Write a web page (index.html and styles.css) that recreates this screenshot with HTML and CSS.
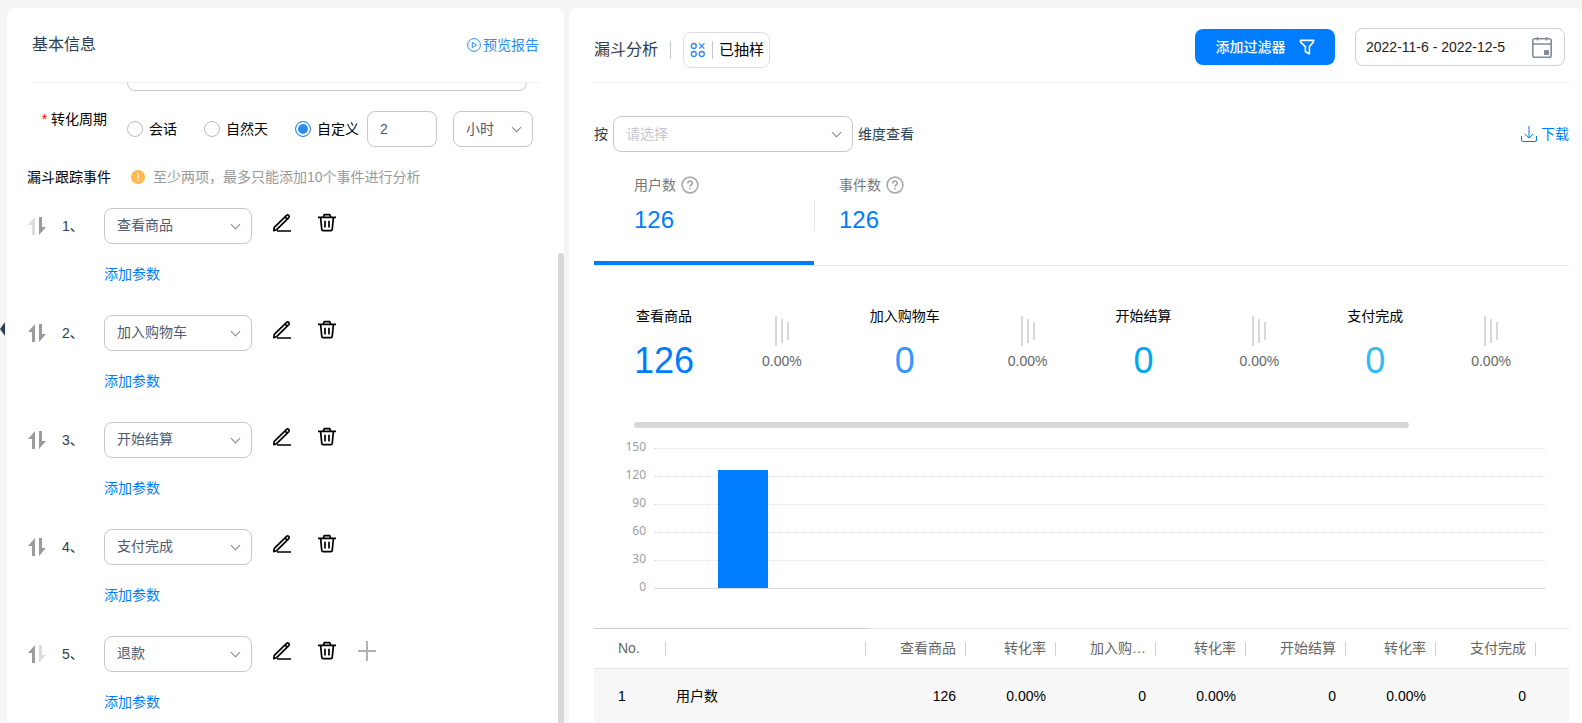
FILE: index.html
```html
<!DOCTYPE html>
<html lang="zh-CN">
<head>
  <meta charset="UTF-8">
  <meta name="viewport" content="width=device-width, initial-scale=1.0">
  <title>漏斗分析</title>
  <link rel="stylesheet" href="styles.css">
</head>
<body>
  <svg class="sprite" aria-hidden="true">
    <symbol id="icon-edit" viewBox="0 0 20 20">
      <path d="M1.8 17.6 L2.3 14.4 L14.6 2.3 C16 1.1 18 3.1 16.8 4.6 L4.6 16.7 Z M13 3.9 L15.2 6.1 M5 18 H19" fill="none" stroke="currentColor" stroke-width="1.7" stroke-linejoin="round"/>
    </symbol>
    <symbol id="icon-delete" viewBox="0 0 20 20">
      <path d="M1 4.4 H19 M6.2 4.2 L7.2 1.7 H12.8 L13.8 4.2 M3.6 4.6 L4.8 16.6 Q5 17.6 6 17.6 H14 Q15 17.6 15.2 16.6 L16.4 4.6 M8 7.8 V14.6 M12 7.8 V14.6" fill="none" stroke="currentColor" stroke-width="1.7" stroke-linejoin="round"/>
    </symbol>
    <symbol id="icon-help" viewBox="0 0 18 18">
      <circle cx="9" cy="9" r="7.9" fill="none" stroke="currentColor" stroke-width="1.6"/>
      <path d="M6.8 7.4 C6.8 4.4 11.3 4.4 11.3 7.2 C11.3 8.7 9 8.8 9 10.8 M9 12 V13.5" fill="none" stroke="currentColor" stroke-width="1.7"/>
    </symbol>
  </svg>

  <div class="page">
    <button class="collapse" aria-label="收起"></button>

    <aside class="panel side">
      <header class="side-header">
        <h2>基本信息</h2>
        <a href="#" class="preview">
          <svg width="14" height="14" viewBox="0 0 14 14" fill="none" stroke="currentColor"><circle cx="7" cy="7" r="6.4"/><path d="M5.3 4.4 L9.6 7 L5.3 9.6 Z" stroke-linejoin="round"/></svg>
          预览报告
        </a>
      </header>

      <div class="side-body">
        <form class="form">
          <input type="text" class="control name-input" aria-label="名称">

          <div class="period">
            <span class="form-label"><i>*</i> 转化周期</span>
            <label class="radio"><input type="radio" name="period">会话</label>
            <label class="radio"><input type="radio" name="period">自然天</label>
            <label class="radio radio-last"><input type="radio" name="period" checked>自定义</label>
            <input type="text" class="control period-value" value="2" aria-label="时长">
            <span class="select period-unit">
              <select class="control" aria-label="单位"><option>小时</option><option>天</option></select>
            </span>
          </div>

          <div class="tip">
            <span class="tip-title">漏斗跟踪事件</span>
            <svg width="14" height="14" viewBox="0 0 14 14"><circle cx="7" cy="7" r="7" fill="#ffb84f"/><path d="M7 3 V8.4 M7 9.8 V11.2" stroke="#fff" stroke-width="1.3"/></svg>
            <span class="tip-text">至少两项，最多只能添加10个事件进行分析</span>
          </div>

          <div class="event">
            <div class="event-row">
              <svg class="sort" viewBox="0 0 18 18"><path class="off" d="M7 0 L0 8 H4 V18 H7 Z"/><path d="M11 0 H14 V10 H18 L11 18 Z"/></svg>
              <span class="event-no">1、</span>
              <span class="select event-select"><select class="control" aria-label="事件1"><option>查看商品</option></select></span>
              <div class="actions">
                <button type="button" class="icon-btn" aria-label="编辑"><svg><use href="#icon-edit"/></svg></button>
                <button type="button" class="icon-btn" aria-label="删除"><svg><use href="#icon-delete"/></svg></button>
              </div>
            </div>
            <a href="#" class="add-param">添加参数</a>
          </div>

          <div class="event">
            <div class="event-row">
              <svg class="sort" viewBox="0 0 18 18"><path d="M7 0 L0 8 H4 V18 H7 Z"/><path d="M11 0 H14 V10 H18 L11 18 Z"/></svg>
              <span class="event-no">2、</span>
              <span class="select event-select"><select class="control" aria-label="事件2"><option>加入购物车</option></select></span>
              <div class="actions">
                <button type="button" class="icon-btn" aria-label="编辑"><svg><use href="#icon-edit"/></svg></button>
                <button type="button" class="icon-btn" aria-label="删除"><svg><use href="#icon-delete"/></svg></button>
              </div>
            </div>
            <a href="#" class="add-param">添加参数</a>
          </div>

          <div class="event">
            <div class="event-row">
              <svg class="sort" viewBox="0 0 18 18"><path d="M7 0 L0 8 H4 V18 H7 Z"/><path d="M11 0 H14 V10 H18 L11 18 Z"/></svg>
              <span class="event-no">3、</span>
              <span class="select event-select"><select class="control" aria-label="事件3"><option>开始结算</option></select></span>
              <div class="actions">
                <button type="button" class="icon-btn" aria-label="编辑"><svg><use href="#icon-edit"/></svg></button>
                <button type="button" class="icon-btn" aria-label="删除"><svg><use href="#icon-delete"/></svg></button>
              </div>
            </div>
            <a href="#" class="add-param">添加参数</a>
          </div>

          <div class="event">
            <div class="event-row">
              <svg class="sort" viewBox="0 0 18 18"><path d="M7 0 L0 8 H4 V18 H7 Z"/><path d="M11 0 H14 V10 H18 L11 18 Z"/></svg>
              <span class="event-no">4、</span>
              <span class="select event-select"><select class="control" aria-label="事件4"><option>支付完成</option></select></span>
              <div class="actions">
                <button type="button" class="icon-btn" aria-label="编辑"><svg><use href="#icon-edit"/></svg></button>
                <button type="button" class="icon-btn" aria-label="删除"><svg><use href="#icon-delete"/></svg></button>
              </div>
            </div>
            <a href="#" class="add-param">添加参数</a>
          </div>

          <div class="event">
            <div class="event-row">
              <svg class="sort" viewBox="0 0 18 18"><path d="M7 0 L0 8 H4 V18 H7 Z"/><path class="off" d="M11 0 H14 V10 H18 L11 18 Z"/></svg>
              <span class="event-no">5、</span>
              <span class="select event-select"><select class="control" aria-label="事件5"><option>退款</option></select></span>
              <div class="actions">
                <button type="button" class="icon-btn" aria-label="编辑"><svg><use href="#icon-edit"/></svg></button>
                <button type="button" class="icon-btn" aria-label="删除"><svg><use href="#icon-delete"/></svg></button>
                <button type="button" class="icon-btn add" aria-label="添加"><svg viewBox="0 0 20 20"><path d="M1 10 H19 M10 0 V20" stroke="#b0b0b0" stroke-width="2"/></svg></button>
              </div>
            </div>
            <a href="#" class="add-param">添加参数</a>
          </div>
        </form>
      </div>
      <div class="side-scroll"></div>
    </aside>

    <main class="panel main">
      <header class="main-header">
        <div class="main-title">
          <h2>漏斗分析</h2>
          <span class="divider"></span>
          <button class="sample">
            <svg width="16" height="16" viewBox="0 0 16 16" fill="none" stroke="#2b85ff" stroke-width="1.3"><circle cx="3.8" cy="4" r="2.5"/><circle cx="3.8" cy="12" r="2.5"/><circle cx="11.8" cy="12" r="2.5"/><path d="M9.2 1.4 L14.4 6.6 M14.4 1.4 L9.2 6.6"/></svg>
            <span class="divider"></span>
            已抽样
          </button>
        </div>
        <div class="main-tools">
          <button class="filter-btn">
            添加过滤器
            <svg width="16" height="16" viewBox="0 0 16 16" fill="none" stroke="#fff" stroke-width="1.6" stroke-linejoin="round"><path d="M1.4 1.4 H14.6 V2.8 L10.4 7.6 V15 L6.4 12.8 V7.6 L1.4 2.8 Z"/></svg>
          </button>
          <div class="date">
            <input type="text" value="2022-11-6 - 2022-12-5" aria-label="日期范围">
            <svg width="20" height="21" viewBox="0 0 20 21" fill="none" stroke="#808b99" stroke-width="1.6"><rect x=".8" y="1.8" width="18.4" height="18.4" rx="2"/><path d="M.8 7 H19.2 M5.5 0 V3.4 M14.5 0 V3.4"/><rect x="12" y="13" width="5" height="5" rx="1" fill="#808b99" stroke="none"/></svg>
          </div>
        </div>
      </header>

      <div class="dimension">
        <label for="dimension">按</label>
        <span class="select dimension-select">
          <select class="control placeholder" id="dimension"><option>请选择</option></select>
        </span>
        <span>维度查看</span>
        <a href="#" class="download">
          <svg width="16" height="16" viewBox="0 0 16 16" fill="none" stroke="currentColor"><path d="M8 0 V12 M4 8 L8 12 L12 8 M.5 10 V14 Q.5 15.5 2 15.5 H14 Q15.5 15.5 15.5 14 V10"/></svg>
          下载
        </a>
      </div>

      <div class="tabs">
        <div class="tab active">
          <div class="tab-name">用户数 <svg width="18" height="18"><use href="#icon-help"/></svg></div>
          <div class="tab-value">126</div>
        </div>
        <div class="tab">
          <div class="tab-name">事件数 <svg width="18" height="18"><use href="#icon-help"/></svg></div>
          <div class="tab-value">126</div>
        </div>
      </div>

      <div class="funnel">
        <div class="step step-1"><div class="step-name">查看商品</div><div class="step-value">126</div></div>
        <div class="rate"><div class="rate-bars"><i></i><i></i><i></i></div>0.00%</div>
        <div class="step step-2"><div class="step-name">加入购物车</div><div class="step-value">0</div></div>
        <div class="rate"><div class="rate-bars"><i></i><i></i><i></i></div>0.00%</div>
        <div class="step step-3"><div class="step-name">开始结算</div><div class="step-value">0</div></div>
        <div class="rate"><div class="rate-bars"><i></i><i></i><i></i></div>0.00%</div>
        <div class="step step-4"><div class="step-name">支付完成</div><div class="step-value">0</div></div>
        <div class="rate"><div class="rate-bars"><i></i><i></i><i></i></div>0.00%</div>
      </div>
      <div class="funnel-scroll"><div class="funnel-thumb"></div></div>

      <div class="chart">
        <div class="axis">
          <span>150</span><span>120</span><span>90</span><span>60</span><span>30</span><span>0</span>
        </div>
        <div class="plot">
          <div class="line"></div>
          <div class="line"></div>
          <div class="line"></div>
          <div class="line"></div>
          <div class="line"></div>
          <div class="bars">
            <div class="slot"><div class="bar" style="height: 84%"></div></div>
            <div class="slot"></div>
            <div class="slot"></div>
            <div class="slot"></div>
            <div class="slot"></div>
          </div>
        </div>
      </div>

      <div class="table-wrap">
        <table class="table">
          <colgroup>
            <col class="col-no"><col class="col-name">
            <col class="col-count"><col class="col-rate">
            <col class="col-count"><col class="col-rate">
            <col class="col-count"><col class="col-rate">
            <col class="col-count"><col class="col-rate">
          </colgroup>
          <thead>
            <tr>
              <th class="no">No.</th>
              <th></th>
              <th>查看商品</th>
              <th>转化率</th>
              <th>加入购…</th>
              <th>转化率</th>
              <th>开始结算</th>
              <th>转化率</th>
              <th>支付完成</th>
              <th></th>
            </tr>
          </thead>
          <tbody>
            <tr>
              <td class="no">1</td>
              <td class="name">用户数</td>
              <td>126</td>
              <td>0.00%</td>
              <td>0</td>
              <td>0.00%</td>
              <td>0</td>
              <td>0.00%</td>
              <td>0</td>
              <td></td>
            </tr>
          </tbody>
        </table>
      </div>
    </main>
  </div>
</body>
</html>
```

FILE: styles.css
```css
:root {
  --blue: #007dff;
  --text: #2c3e50;
  --border: #c8c8c8;
  --line: #efefef;
}

* {
  box-sizing: border-box;
}

body {
  margin: 0;
  background-color: #f5f5f5;
  color: var(--text);
  font-family: "Liberation Sans", "Noto Sans CJK SC", sans-serif;
  font-size: 14px;
  line-height: 20px;
}

button,
input,
select {
  font: inherit;
  color: inherit;
}

button {
  border: none;
  background: none;
  padding: 0;
  cursor: pointer;
}

a {
  color: var(--blue);
  text-decoration: none;
}

h2 {
  margin: 0;
  font-size: 16px;
  font-weight: 400;
}

.sprite {
  display: none;
}

.page {
  position: relative;
  display: flex;
  gap: 5px;
  height: 100vh;
  padding: 8px 0 0 7px;
  overflow: hidden;
}

.collapse {
  position: absolute;
  left: 0;
  top: 322px;
  border: solid transparent;
  border-width: 7px 5px 7px 0;
  border-right-color: var(--text);
}

.panel {
  background-color: #fff;
  border-radius: 8px 8px 0 0;
}

/* left side */
.side {
  position: relative;
  flex: 0 0 557px;
  display: flex;
  flex-direction: column;
}

.side-header {
  display: flex;
  justify-content: space-between;
  align-items: center;
  flex: 0 0 75px;
  margin: 0 25px;
  border-bottom: 1px solid var(--line);
}

.preview {
  display: flex;
  align-items: center;
  gap: 2px;
  color: #2d8cf0;
}

.side-body {
  flex: 1;
  min-height: 0;
  padding-left: 20px;
  overflow: hidden;
}

.side-scroll {
  position: absolute;
  right: 0;
  top: 245px;
  bottom: 0;
  width: 6px;
  border-radius: 3px 3px 0 0;
  background-color: #d8d8d8;
}

/* the list is scrolled, only the bottom of the first field is in view */
.form {
  margin-top: -28px;
}

.control {
  width: 100%;
  height: 36px;
  padding: 0 12px;
  border: 1px solid var(--border);
  border-radius: 8px;
  background-color: #fff;
  color: #515a6e;
  outline: none;
  appearance: none;
}

.select {
  position: relative;
  display: block;
}

.select::after {
  content: "";
  position: absolute;
  right: 13px;
  top: 13px;
  width: 6px;
  height: 6px;
  border: solid #808695;
  border-width: 0 1px 1px 0;
  transform: rotate(45deg);
  pointer-events: none;
}

.name-input {
  display: block;
  width: 400px;
  margin-left: 100px;
}

.period {
  display: flex;
  align-items: center;
  margin-top: 20px;
  color: #000;
}

.form-label {
  align-self: flex-start;
  width: 80px;
  margin-right: 20px;
  line-height: 16px;
  text-align: right;
}

.form-label i {
  color: #f00;
  font-style: normal;
}

.radio {
  display: flex;
  align-items: center;
  gap: 6px;
  margin-right: 27px;
}

.radio-last {
  margin-right: 8px;
}

.radio input {
  width: 16px;
  height: 16px;
  margin: 0;
  border: 1px solid #b8bbc0;
  border-radius: 50%;
  appearance: none;
}

.radio input:checked {
  border-color: #2d8cf0;
  background-color: #2d8cf0;
  box-shadow: inset 0 0 0 2px #fff;
}

.period-value {
  width: 70px;
  margin-right: 16px;
}

.period-unit {
  width: 80px;
}

.tip {
  display: flex;
  align-items: center;
  margin: 20px 0 21px;
  color: #000;
}

.tip-title {
  margin-right: 20px;
}

.tip-text {
  margin-left: 8px;
  color: #999;
}

.event {
  padding-bottom: 31px;
}

.event-row {
  display: flex;
  align-items: center;
  height: 36px;
  padding-left: 1px;
}

.sort {
  width: 18px;
  height: 18px;
  margin-right: 16px;
  fill: #9b9b9b;
}

.sort .off {
  fill: #dcdcdc;
}

.event-no {
  width: 42px;
}

.event-select {
  width: 148px;
}

.event-select .control {
  padding-bottom: 2px;
}

.actions {
  display: flex;
  gap: 25px;
  padding: 0 0 6px 20px;
}

.icon-btn,
.icon-btn svg {
  display: block;
  width: 20px;
  height: 20px;
  color: #000;
}

.icon-btn.add {
  margin-left: -5px;
}

.add-param {
  display: block;
  margin: 20px 0 0 77px;
}

/* right side */
.main {
  flex: 1;
  min-width: 0;
  padding: 0 13px 0 25px;
  overflow: hidden;
}

.main-header {
  display: flex;
  justify-content: space-between;
  align-items: center;
  height: 75px;
  padding-top: 4px;
  border-bottom: 1px solid var(--line);
}

.main-title {
  display: flex;
  align-items: center;
  gap: 12px;
  padding-top: 6px;
}

.divider {
  width: 1px;
  height: 18px;
  background-color: #c5c8ce;
}

.sample {
  display: flex;
  align-items: center;
  gap: 6px;
  height: 36px;
  padding: 0 5px 0 6px;
  border: 1px solid #dcdee8;
  border-radius: 8px;
  color: #000;
  font-size: 15px;
}

.main-tools {
  display: flex;
  align-items: center;
  gap: 20px;
  padding-right: 4px;
}

.filter-btn {
  display: flex;
  align-items: center;
  justify-content: center;
  gap: 13px;
  width: 140px;
  height: 36px;
  border-radius: 8px;
  background-color: var(--blue);
  color: #fff;
  font-weight: 500;
}

.date {
  display: flex;
  align-items: center;
  justify-content: space-between;
  width: 210px;
  height: 38px;
  padding: 0 12px 0 10px;
  border: 1px solid #d0d0d0;
  border-radius: 8px;
}

.date input {
  flex: 1;
  min-width: 0;
  padding: 0;
  border: none;
  color: #222;
  outline: none;
}

.dimension {
  display: flex;
  align-items: center;
  gap: 5px;
  margin-top: 33px;
}

.dimension-select {
  width: 240px;
}

.placeholder {
  color: #c5c8ce;
}

.download {
  display: flex;
  align-items: center;
  gap: 4px;
  margin-left: auto;
}

.tabs {
  display: flex;
  height: 114px;
  border-bottom: 1px solid #e8e8e8;
}

.tab {
  position: relative;
  width: 220px;
  padding: 23px 0 0 25px;
}

.tab.active {
  padding-left: 40px;
  border-bottom: 4px solid var(--blue);
}

.tab.active::after {
  content: "";
  position: absolute;
  right: -1px;
  top: 48px;
  width: 1px;
  height: 30px;
  background-color: #e8e8e8;
}

.tab-name {
  display: flex;
  align-items: center;
  gap: 5px;
  color: #777;
}

.tab-name svg {
  color: #aaa;
}

.tab-value {
  margin-top: 11px;
  color: var(--blue);
  font-size: 24px;
  line-height: 28px;
}

.funnel {
  display: flex;
  gap: 68px;
  padding: 40px 0 0 40px;
}

.step {
  flex: none;
  text-align: center;
}

.step-name {
  color: #000;
}

.step-value {
  margin-top: 15px;
  font-size: 36px;
  line-height: 40px;
}

.step-1 .step-value { color: #007dff; }
.step-2 .step-value { color: #3897ff; }
.step-3 .step-value { color: #00a9f1; }
.step-4 .step-value { color: #33baf4; }

.rate {
  flex: none;
  padding-top: 10px;
  color: #666;
  text-align: center;
}

.rate-bars {
  display: flex;
  justify-content: center;
  align-items: center;
  gap: 4px;
  margin-bottom: 5px;
}

.rate-bars i {
  width: 2px;
  height: 30px;
  background-color: #d8d8d8;
}

.rate-bars i:nth-child(2) { height: 24px; }
.rate-bars i:nth-child(3) { height: 18px; }

.funnel-scroll {
  margin: 41px 34px 20px 40px;
}

.funnel-thumb {
  width: 86%;
  height: 6px;
  border-radius: 3px;
  background-color: #d8d8d8;
}

.chart {
  display: flex;
  gap: 8px;
  padding-right: 23px;
}

.axis {
  width: 52px;
  margin: -15px 0 -13px;
  color: #999fa8;
  font-family: "Noto Sans", sans-serif;
  font-size: 12px;
  line-height: 28px;
  text-align: right;
}

.axis span {
  display: block;
}

.plot {
  position: relative;
  flex: 1;
  height: 141px;
  border-bottom: 1px solid #dcdcdc;
}

.line {
  height: 28px;
  border-top: 1px dotted #e0e0e0;
}

.bars {
  position: absolute;
  inset: 0;
  display: flex;
}

.slot {
  flex: 1;
  display: flex;
  justify-content: center;
  align-items: flex-end;
}

.bar {
  width: 28%;
  background-color: var(--blue);
}

.table-wrap {
  margin-top: 39px;
  overflow: hidden;
}

.table {
  width: 1032px;
  table-layout: fixed;
  border-collapse: separate;
  border-spacing: 0;
}

.col-no { width: 72px; }
.col-name { width: 200px; }
.col-count { width: 100px; }
.col-rate { width: 90px; }

.table th {
  position: relative;
  height: 41px;
  padding: 0 10px 1px;
  border: solid #e2e2e2;
  border-width: 1px 0;
  color: #666;
  font-weight: 400;
  text-align: right;
}

.table th:nth-child(-n+2) {
  border-top-color: #ccc;
}

.table th::after {
  content: "";
  position: absolute;
  right: 0;
  top: 13px;
  width: 1px;
  height: 14px;
  background-color: #d0d0d0;
}

.table td {
  height: 55px;
  padding: 0 10px 2px;
  background-color: #f7f7f7;
  color: #000;
  text-align: right;
}

.table .no {
  padding-left: 24px;
  text-align: left;
}

.table .name {
  text-align: left;
}
```
